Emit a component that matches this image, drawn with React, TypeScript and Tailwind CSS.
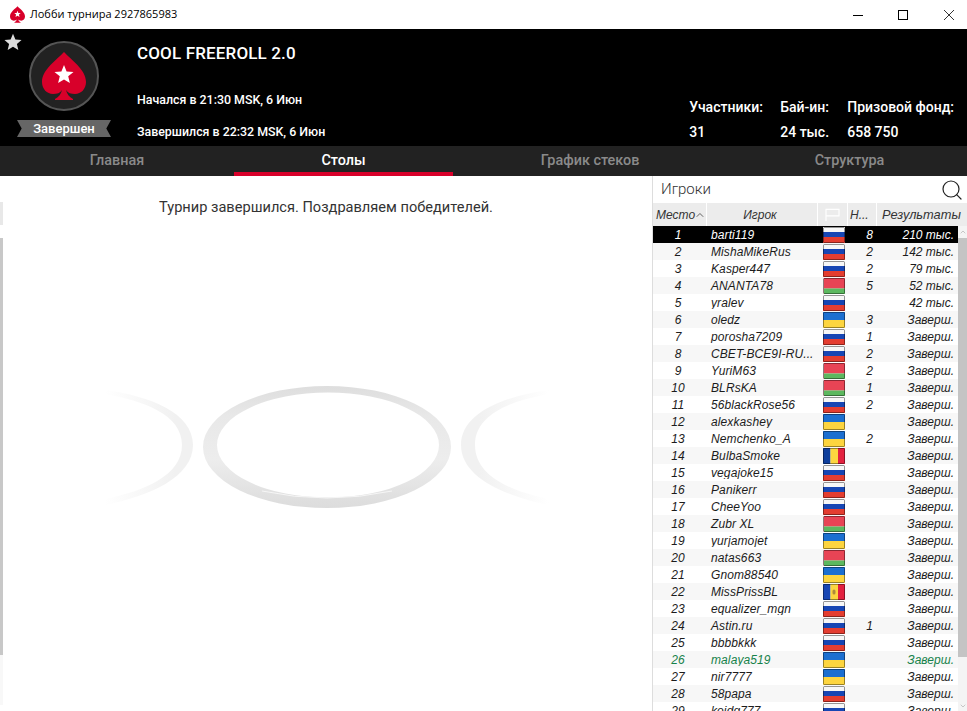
import { Search, ChevronUp, ChevronDown } from "lucide-react";

type FlagCode = "ru" | "by" | "ua" | "ro" | "md";

type Player = {
  name: string;
  flag: FlagCode;
  tables?: number;
  result: string;
};

const done = "Заверш.";

const players: Player[] = [
  { name: "barti119", flag: "ru", tables: 8, result: "210 тыс." },
  { name: "MishaMikeRus", flag: "ru", tables: 2, result: "142 тыс." },
  { name: "Kasper447", flag: "ru", tables: 2, result: "79 тыс." },
  { name: "ANANTA78", flag: "by", tables: 5, result: "52 тыс." },
  { name: "yralev", flag: "ru", result: "42 тыс." },
  { name: "oledz", flag: "ua", tables: 3, result: done },
  { name: "porosha7209", flag: "ru", tables: 1, result: done },
  { name: "CBET-BCE9I-RU...", flag: "ru", tables: 2, result: done },
  { name: "YuriM63", flag: "by", tables: 2, result: done },
  { name: "BLRsKA", flag: "by", tables: 1, result: done },
  { name: "56blackRose56", flag: "ru", tables: 2, result: done },
  { name: "alexkashey", flag: "ua", result: done },
  { name: "Nemchenko_A", flag: "ua", tables: 2, result: done },
  { name: "BulbaSmoke", flag: "ro", result: done },
  { name: "vegajoke15", flag: "ru", result: done },
  { name: "Panikerr", flag: "ru", result: done },
  { name: "CheeYoo", flag: "ru", result: done },
  { name: "Zubr XL", flag: "by", result: done },
  { name: "yurjamojet", flag: "ua", result: done },
  { name: "natas663", flag: "by", result: done },
  { name: "Gnom88540", flag: "ua", result: done },
  { name: "MissPrissBL", flag: "md", result: done },
  { name: "equalizer_mgn", flag: "ru", result: done },
  { name: "Astin.ru", flag: "ru", tables: 1, result: done },
  { name: "bbbbkkk", flag: "ru", result: done },
  { name: "malaya519", flag: "ua", result: done },
  { name: "nir7777", flag: "ua", result: done },
  { name: "58papa", flag: "ru", result: done },
  { name: "kojdg777", flag: "ru", result: done },
];

const tabs = ["Главная", "Столы", "График стеков", "Структура"];

function Spade({ className }: { className: string }) {
  return (
    <svg viewBox="0 0 44 48" className={className}>
      <path
        fill="#d8002a"
        d="M22 0C16 7 0 17 0 30c0 7 5 12 11 12 4 0 7-1 9-4-1 4-3 7-7 9v1h18v-1c-4-2-6-5-7-9 2 3 5 4 9 4 6 0 11-5 11-12C44 17 28 7 22 0Z"
      />
      <path
        fill="#fff"
        d="M22 13l2.600 6.400 6.900.5-5.300 4.400 1.700 6.700-5.900-3.600-5.900 3.600 1.700-6.700-5.300-4.400 6.900-.5Z"
      />
    </svg>
  );
}

function Flag({ code }: { code: FlagCode }) {
  return (
    <svg viewBox="0 0 22 16" className="w-[22px] h-4 shrink-0">
      {code === "ru" && (
        <>
          <rect width="22" height="5" fill="#f7f7f7" />
          <rect y="5" width="22" height="5" fill="#1746b4" />
          <rect y="10" width="22" height="6" fill="#e43d30" />
        </>
      )}
      {code === "by" && (
        <>
          <rect width="22" height="10.500" fill="#e84455" />
          <rect y="10.500" width="22" height="5.500" fill="#5cb85f" />
          <rect width="1" height="16" fill="#f3c5c9" />
        </>
      )}
      {code === "ua" && (
        <>
          <rect width="22" height="8" fill="#1c6fd0" />
          <rect y="8" width="22" height="8" fill="#fdd53f" />
        </>
      )}
      {code === "ro" && (
        <>
          <rect width="7.500" height="16" fill="#0f3f9c" />
          <rect x="7.500" width="7.500" height="16" fill="#fdd53f" />
          <rect x="15" width="7" height="16" fill="#e3213f" />
        </>
      )}
      {code === "md" && (
        <>
          <rect width="7.500" height="16" fill="#1746b4" />
          <rect x="7.500" width="7.500" height="16" fill="#fdd53f" />
          <rect x="15" width="7" height="16" fill="#e3213f" />
          <rect x="9.500" y="5.500" width="3" height="5" rx="1.500" fill="#b08a3a" />
        </>
      )}
      <rect x="0.500" y="0.500" width="21" height="15" rx="1" fill="none" stroke="#000" strokeOpacity="0.4" strokeWidth="1" />
    </svg>
  );
}

function Rings() {
  return (
    <svg viewBox="0 0 652 140" className="w-[652px] h-[140px] shrink-0">
      <defs>
        <linearGradient id="fadeLeft" gradientUnits="userSpaceOnUse" x1="105" y1="0" x2="193" y2="0">
          <stop offset="0" stopColor="#f1f1f1" stopOpacity="0" />
          <stop offset="0.8" stopColor="#f1f1f1" />
        </linearGradient>
        <linearGradient id="fadeRight" gradientUnits="userSpaceOnUse" x1="549" y1="0" x2="461" y2="0">
          <stop offset="0" stopColor="#f1f1f1" stopOpacity="0" />
          <stop offset="0.8" stopColor="#f1f1f1" />
        </linearGradient>
        <linearGradient id="mainRing" x1="0" y1="0" x2="0" y2="1">
          <stop offset="0" stopColor="#dedede" />
          <stop offset="0.25" stopColor="#e8e8e8" />
          <stop offset="0.6" stopColor="#ededed" />
          <stop offset="1" stopColor="#dcdcdc" />
        </linearGradient>
      </defs>
      <path
        fillRule="evenodd"
        fill="url(#mainRing)"
        d="M203 64a124 61 0 1 0 248 0a124 61 0 1 0-248 0ZM217 62a111 52.500 0 1 1 222 0a111 52.500 0 1 1-222 0Z"
      />
      <path fill="none" stroke="#f6f6f6" strokeWidth="1" d="M262 108Q327 122 392 108" />
      <path
        fill="url(#fadeLeft)"
        d="M105 7C150 13 193 30 193 62S150 113 105 122V116C145 108 182 92 182 62S145 18 105 11Z"
      />
      <path
        fill="url(#fadeRight)"
        d="M549 7C504 13 461 30 461 62S504 113 549 122V116C509 108 475 92 475 62S509 18 549 11Z"
      />
    </svg>
  );
}

function PlayerRow({ index, player }: { index: number; player: Player }) {
  const selected = index === 0;
  const mine = player.name === "malaya519";
  const stripe = selected ? "bg-black text-white" : index % 2 === 1 ? "bg-[#f7f7f7]" : "bg-white";
  const color = selected ? "" : mine ? "text-[#16824a]" : "text-[#1c1c1c]";
  return (
    <div className={`grid grid-cols-[54px_111px_30px_29px_1fr] h-[17px] shrink-0 items-center text-[12px] italic leading-none ${stripe} ${color}`}>
      <div className="text-center pr-1">{index + 1}</div>
      <div className="pl-1 whitespace-nowrap overflow-hidden tracking-[0.1px]">{player.name}</div>
      <div className="flex justify-center pl-[1px]">
        <Flag code={player.flag} />
      </div>
      <div className="text-right pr-1">{player.tables}</div>
      <div className="text-right pr-1">{player.result}</div>
    </div>
  );
}

export default function App() {
  return (
    <div className="w-[967px] h-[711px] overflow-hidden flex flex-col bg-white font-['Roboto',sans-serif]">
      {/* window title bar */}
      <div className="h-[29px] shrink-0 flex items-center pl-[10px]">
        <Spade className="w-[15px] h-[17px]" />
        <span className="ml-[5px] text-[11px] text-black font-['Open_Sans',sans-serif]">Лобби турнира 2927865983</span>
        <div className="ml-auto flex items-center pr-[13px]">
          <svg viewBox="0 0 10 10" className="w-[10px] h-[10px]">
            <path stroke="#000" strokeWidth="1" d="M0 5.500h10" />
          </svg>
          <svg viewBox="0 0 10 10" className="ml-[35px] w-[10px] h-[10px]">
            <rect x="0.500" y="0.500" width="9" height="9" fill="none" stroke="#000" strokeWidth="1" />
          </svg>
          <svg viewBox="0 0 10 10" className="ml-[36px] w-[10px] h-[10px]">
            <path stroke="#000" strokeWidth="0.800" d="M0 0l10 10M10 0L0 10" />
          </svg>
        </div>
      </div>

      {/* tournament header */}
      <div className="h-[117px] shrink-0 bg-black text-white flex relative">
        <svg viewBox="0 0 24 24" className="absolute left-[4px] top-[4px] w-[18px] h-[18px]">
          <path fill="#dcdcdc" d="M12 1l3.200 7.600 8.200.7-6.200 5.400 1.900 8L12 18.400 4.900 22.700l1.900-8L.6 9.300l8.200-.7Z" />
        </svg>
        <div className="w-[128px] shrink-0 flex flex-col items-center pt-3">
          <div className="w-[70px] h-[70px] rounded-full bg-[#222] border-2 border-[#555] flex items-center justify-center">
            <Spade className="w-[44px] h-[48px]" />
          </div>
          <div className="mt-[9px] w-[94px] h-[17px] bg-[#666] flex items-center justify-center text-[13px] font-medium [clip-path:polygon(0_0,100%_0,95%_50%,100%_100%,0_100%,5%_50%)]">
            Завершен
          </div>
        </div>
        <div className="ml-[9px] flex flex-col">
          <div className="mt-[14px] text-[17px] leading-5 font-medium tracking-[0.15px]">COOL FREEROLL 2.0</div>
          <div className="mt-[29px] text-[12.400px] leading-4 font-medium">Начался в 21:30 MSK, 6 Июн</div>
          <div className="mt-[16px] text-[12.400px] leading-4 font-medium">Завершился в 22:32 MSK, 6 Июн</div>
        </div>
        <div className="ml-auto mr-[13px] mt-[68px] flex text-[14px] leading-5 font-medium">
          <div className="w-[91px]">
            <div>Участники:</div>
            <div className="mt-[5px]">31</div>
          </div>
          <div className="w-[67px]">
            <div>Бай-ин:</div>
            <div className="mt-[5px]">24 тыс.</div>
          </div>
          <div>
            <div>Призовой фонд:</div>
            <div className="mt-[5px]">658 750</div>
          </div>
        </div>
      </div>

      {/* tabs */}
      <div className="h-[30px] shrink-0 bg-[#222] grid grid-cols-[234px_219px_274px_1fr] text-[14.400px] font-medium">
        {tabs.map((tab, i) => (
          <div
            key={tab}
            className={`flex items-center justify-center pt-[4px] border-b-4 ${
              i === 1 ? "text-white border-[#d8002a]" : "text-[#8a8a8a] border-transparent"
            } ${i === 3 ? "pl-[5px]" : ""}`}
          >
            {tab}
          </div>
        ))}
      </div>

      <div className="flex-1 flex min-h-0">
        {/* tables pane */}
        <div className="w-[652px] shrink-0 flex flex-col items-center relative">
          <div className="absolute left-0 top-[26px] w-[3px] h-[23px] bg-[#e8e8e8]" />
          <div className="absolute left-0 top-[62px] w-[3px] h-[417px] bg-[#c8c8c8]" />
          <div className="absolute left-0 top-[479px] w-[3px] bottom-[6px] bg-[#f8f8f8]" />
          <p className="mt-[22px] text-[14.600px] leading-[18px] text-[#333]">Турнир завершился. Поздравляем победителей.</p>
          <div className="mt-[167px]">
            <Rings />
          </div>
        </div>

        {/* players pane */}
        <div className="flex-1 flex flex-col min-w-0 border-l border-[#ddd] font-['Liberation_Sans',sans-serif]">
          <div className="h-[27px] shrink-0 flex items-center pl-[8px] pr-[3px] bg-white">
            <span className="text-[15px] text-[#333] font-light font-['Roboto',sans-serif]">Игроки</span>
            <Search className="ml-auto w-6 h-6 text-[#222]" strokeWidth={1.2} />
          </div>
          <div className="h-[23px] shrink-0 grid grid-cols-[54px_111px_30px_29px_1fr] gap-x-0 bg-[#ececec] text-[12px] italic text-[#333]">
            <div className="flex items-center pl-[3px] border-r border-white">
              Место
              <ChevronUp className="-ml-[1px] w-3 h-3" strokeWidth={1.5} />
            </div>
            <div className="flex items-center justify-center pr-1 border-r border-white">Игрок</div>
            <div className="flex items-center justify-center border-r border-white">
              <svg viewBox="0 0 16 14" className="w-[15px] h-[13px]">
                <path fill="none" stroke="#fff" strokeWidth="1.200" d="M1 14V1.500h14v7H1" />
              </svg>
            </div>
            <div className="flex items-center pl-[2px] border-r border-white">Н...</div>
            <div className="flex items-center pl-[5px] whitespace-nowrap text-[12.800px]">Результаты</div>
          </div>
          <div className="flex-1 flex min-h-0">
            <div className="w-[305px] flex flex-col overflow-hidden">
              {players.map((player, i) => (
                <PlayerRow key={player.name} index={i} player={player} />
              ))}
            </div>
            <div className="flex-1 bg-[#f4f4f4] flex flex-col">
              <div className="h-[12px] shrink-0 flex items-center justify-center">
                <ChevronUp className="w-[8px] h-[8px] text-[#999]" strokeWidth={1.5} />
              </div>
              <div className="h-[419px] shrink-0 bg-[#c4c4c4]" />
              <div className="flex-1" />
              <div className="h-[10px] shrink-0 flex items-center justify-center">
                <ChevronDown className="w-[8px] h-[8px] text-[#999]" strokeWidth={1.5} />
              </div>
            </div>
          </div>
        </div>
      </div>
    </div>
  );
}
